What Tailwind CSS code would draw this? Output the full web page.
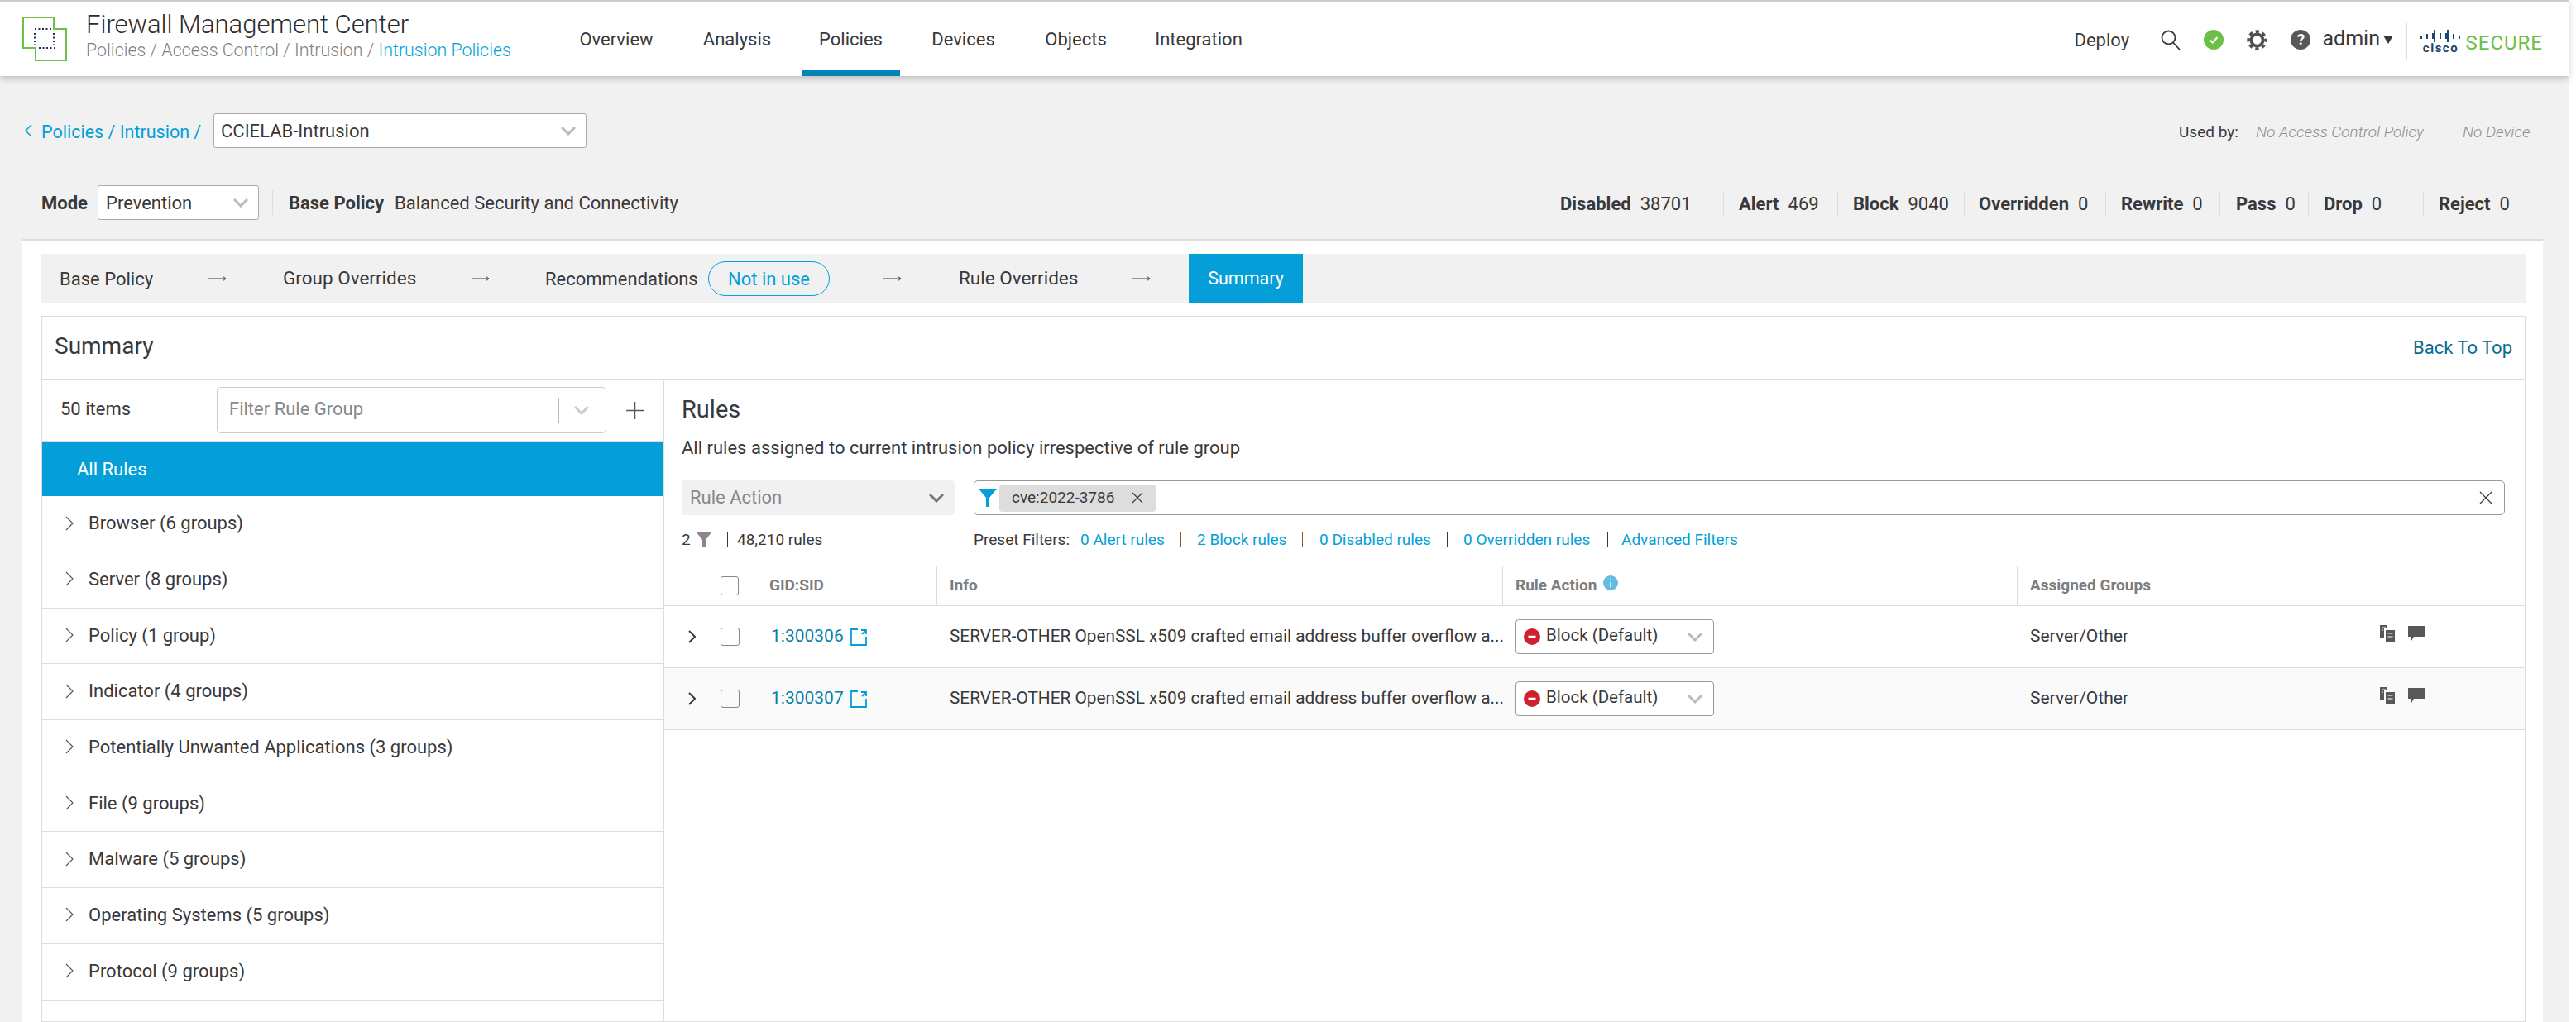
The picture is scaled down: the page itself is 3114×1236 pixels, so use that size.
<!DOCTYPE html>
<html lang="en">
<head>
  <meta charset="UTF-8" />
  <title>Firewall Management Center</title>
  <script src="https://cdn.jsdelivr.net/npm/@tailwindcss/browser@4"></script>
</head>
<body class="bg-white">
  <div class="w-[3114px] h-[1236px] overflow-hidden bg-white [font-family:Roboto,sans-serif] text-[22px] text-[#39393b]">
    <div class="w-[3106px] h-full border-r border-[#777] bg-[#f1f1f1] flex flex-col">

      <!-- top bar -->
      <header class="h-[92px] shrink-0 bg-white border-t-2 border-[#ccc] shadow-[0_3px_8px_rgba(0,0,0,0.22)] flex items-stretch relative z-10">
        <div class="w-[104px] shrink-0 pl-[27px] pt-[18px]">
          <svg width="56" height="56" viewBox="0 0 56 56" fill="none">
            <path d="M1 1H38V15H53V53H16V38H1Z" stroke="#6cc04a" stroke-width="2"/>
            <path d="M15 15H35M15 20V34M38 20V34M20 38H39" stroke="#1e2f5e" stroke-width="2" stroke-dasharray="2 2.500"/>
          </svg>
        </div>
        <div class="w-[573px] shrink-0 pt-[10px]">
          <div class="text-[31px] leading-[35px] font-light text-[#2b2b2d]">Firewall Management Center</div>
          <div class="mt-[1px] text-[21.400px] leading-[25px] font-light text-[#7f7f82]">Policies / Access Control / Intrusion / <span class="text-[#049fd9]">Intrusion Policies</span></div>
        </div>
        <nav class="flex items-stretch">
          <a class="w-[136px] flex items-center justify-center pt-[7px] border-b-[7px] border-transparent">Overview</a>
          <a class="w-[156px] flex items-center justify-center pt-[7px] border-b-[7px] border-transparent">Analysis</a>
          <a class="w-[119px] flex items-center justify-center pt-[7px] border-b-[7px] border-[#0284b5]">Policies</a>
          <a class="w-[153px] flex items-center justify-center pt-[7px] border-b-[7px] border-transparent">Devices</a>
          <a class="w-[119px] flex items-center justify-center pt-[7px] border-b-[7px] border-transparent">Objects</a>
          <a class="w-[178px] flex items-center justify-center pt-[7px] border-b-[7px] border-transparent">Integration</a>
        </nav>
        <div class="flex-1"></div>
        <div class="flex items-center pr-[31px] pt-[2px]">
          <span class="w-[105px]">Deploy</span>
          <svg class="w-[24px] h-[24px]" viewBox="0 0 24 24" fill="none" stroke="#39393b" stroke-width="1.800">
            <circle cx="9.500" cy="9.500" r="8"/><path d="M15 15.500L23 24"/>
          </svg>
          <svg class="ml-[28px] w-[24px] h-[24px]" viewBox="0 0 24 24">
            <circle cx="12" cy="12" r="12" fill="#6cc04a"/><path d="M7.500 12.500L10.800 15.500L16.500 9" fill="none" stroke="#fff" stroke-width="2"/>
          </svg>
          <svg class="ml-[28px] w-[25px] h-[25px]" viewBox="0 0 24 24" fill="none" stroke="#4f4f52">
            <circle cx="12" cy="12" r="6.800" stroke-width="3.600"/>
            <circle cx="12" cy="12" r="10" stroke-width="3.400" stroke-dasharray="4.200 3.650" stroke-dashoffset="2.100"/>
          </svg>
          <div class="ml-[28px] w-[24px] h-[24px] rounded-full bg-[#58585b] text-white text-[19px] leading-[24px] font-bold text-center">?</div>
          <span class="ml-[14px] w-[68px] text-[25px] leading-[28px] pb-[3px]">admin</span>
          <svg class="ml-[6px] mb-[1px]" width="12" height="10" viewBox="0 0 12 10"><path d="M0 0H12L6 10Z" fill="#39393b"/></svg>
          <div class="ml-[16px] mt-[4px] w-px h-[45px] bg-[#ddd]"></div>
          <div class="ml-[15px] w-[50px] mt-[4px] flex flex-col items-center">
            <svg width="48" height="16" viewBox="0 0 48 16" stroke="#1e4471" stroke-width="2">
              <path d="M1 7V11M8 5V11M15 4V11M17 0V15M24 4V11M31 4V11M33 0V15M40 5V11M47 7V11"/>
            </svg>
            <span class="text-[15px] leading-[13px] font-bold tracking-[1.500px] text-[#1e4471]">cisco</span>
          </div>
          <span class="ml-[5px] mt-[8px] text-[24px] leading-[28px] tracking-[1px] text-[#6cc04a]">SECURE</span>
        </div>
      </header>

      <!-- breadcrumb -->
      <div class="mt-[45px] h-[42px] shrink-0 flex items-center pl-[30px]">
        <svg width="9" height="16" viewBox="0 0 9 16" fill="none" stroke="#049fd9" stroke-width="1.500"><path d="M8 1L1 8L8 15"/></svg>
        <span class="ml-[11px] w-[208px] text-[21.500px] text-[#049fd9] pt-[5px]">Policies / Intrusion /</span>
        <div class="w-[451px] h-[42px] bg-white border border-[#aaa] rounded-[3px] flex items-center pl-[8px] pr-[12px] justify-between">
          <span>CCIELAB-Intrusion</span>
          <svg width="18" height="11" viewBox="0 0 18 11" fill="none" stroke="#bbb" stroke-width="3"><path d="M1 1L9 9L17 1"/></svg>
        </div>
        <div class="flex-1"></div>
        <span class="w-[93px] text-[19px] pt-[4px]">Used by:</span>
        <i class="w-[227px] text-[19px] text-[#8d8d90] font-light pt-[4px]">No Access Control Policy</i>
        <div class="w-px h-[18px] mt-[4px] bg-[#8a5a2b]"></div>
        <i class="ml-[22px] w-[128px] text-[19px] text-[#8d8d90] font-light pt-[4px]">No Device</i>
      </div>

      <!-- mode + stats -->
      <div class="mt-[45px] h-[42px] shrink-0 flex items-center pl-[50px]">
        <b class="w-[68px] font-bold">Mode</b>
        <div class="w-[195px] h-[42px] bg-white border border-[#aaa] rounded-[3px] flex items-center pl-[9px] pr-[12px] justify-between">
          <span>Prevention</span>
          <svg width="18" height="11" viewBox="0 0 18 11" fill="none" stroke="#bbb" stroke-width="3"><path d="M1 1L9 9L17 1"/></svg>
        </div>
        <div class="ml-[16px] w-px h-[30px] bg-[#ddd]"></div>
        <b class="ml-[19px] font-bold w-[128px]">Base Policy</b>
        <span>Balanced Security and Connectivity</span>
        <div class="flex-1"></div>
        <div class="flex items-center h-[30px] mt-[2px] pr-[70px]">
          <div class="w-[197px]"><b class="font-bold mr-[11px]">Disabled</b>38701</div>
          <div class="w-[138px] h-full flex items-center border-l border-[#ddd] pl-[18px]"><b class="font-bold mr-[11px]">Alert</b>469</div>
          <div class="w-[153px] h-full flex items-center border-l border-[#ddd] pl-[18px]"><b class="font-bold mr-[11px]">Block</b>9040</div>
          <div class="w-[171px] h-full flex items-center border-l border-[#ddd] pl-[17px]"><b class="font-bold mr-[11px]">Overridden</b>0</div>
          <div class="w-[138px] h-full flex items-center border-l border-[#ddd] pl-[18px]"><b class="font-bold mr-[11px]">Rewrite</b>0</div>
          <div class="w-[107px] h-full flex items-center border-l border-[#ddd] pl-[19px]"><b class="font-bold mr-[11px]">Pass</b>0</div>
          <div class="w-[139px] h-full flex items-center border-l border-[#ddd] pl-[18px]"><b class="font-bold mr-[11px]">Drop</b>0</div>
          <div class="w-[106px] h-full flex items-center border-l border-[#ddd] pl-[18px]"><b class="font-bold mr-[11px]">Reject</b>0</div>
        </div>
      </div>

      <!-- main card -->
      <div class="mt-[23px] ml-[27px] w-[3047px] flex-1 min-h-0 bg-white border-t-[3px] border-[#ddd] pl-[23px] pr-[21px] pt-[15px] flex flex-col">
        <div class="h-[60px] shrink-0 bg-[#f1f1f1] flex items-center pl-[22px] text-[22px]">
          <span class="w-[180px]">Base Policy</span>
          <svg class="w-[90px]" height="10" viewBox="0 0 90 10" fill="none" stroke="#39393b"><path d="M0 5H21M17 2L21 5L17 8"/></svg>
          <span class="w-[228px] text-[22.500px]">Group Overrides</span>
          <svg class="w-[89px]" height="10" viewBox="0 0 89 10" fill="none" stroke="#39393b"><path d="M0 5H21M17 2L21 5L17 8"/></svg>
          <span class="w-[197px]">Recommendations</span>
          <span class="w-[147px] h-[42px] rounded-full border border-[#049fd9] text-[#049fd9] flex items-center justify-center">Not in use</span>
          <svg class="ml-[65px] w-[91px]" height="10" viewBox="0 0 91 10" fill="none" stroke="#39393b"><path d="M0 5H21M17 2L21 5L17 8"/></svg>
          <span class="w-[210px] text-[22.500px]">Rule Overrides</span>
          <svg class="w-[68px]" height="10" viewBox="0 0 68 10" fill="none" stroke="#39393b"><path d="M0 5H21M17 2L21 5L17 8"/></svg>
          <span class="w-[138px] h-full text-[21.500px] bg-[#049fd9] text-white flex items-center justify-center">Summary</span>
        </div>

        <div class="mt-[15px] flex-1 min-h-0 border border-[#ddd] flex flex-col overflow-hidden">
          <div class="h-[76px] shrink-0 border-b border-[#ddd] flex items-center justify-between pl-[15px] pr-[15px]">
            <span class="text-[28px] pb-[3px]">Summary</span>
            <span class="text-[#0a6a91]">Back To Top</span>
          </div>
          <div class="flex-1 min-h-0 flex">

            <!-- rule groups -->
            <aside class="w-[752px] shrink-0 border-r border-[#ddd]">
              <div class="h-[75px] border-b border-[#ddd] flex items-center pl-[22px]">
                <span class="w-[189px] pb-[3px]">50 items</span>
                <div class="w-[471px] h-[56px] border border-[#ccc] rounded-[5px] flex items-center pl-[14px]">
                  <span class="w-[398px] pb-[3px] text-[#88888b]">Filter Rule Group</span>
                  <div class="w-px h-[31px] bg-[#bbb]"></div>
                  <svg class="ml-[18px]" width="18" height="11" viewBox="0 0 18 11" fill="none" stroke="#ccc" stroke-width="3"><path d="M1 1L9 9L17 1"/></svg>
                </div>
                <svg class="ml-[24px]" width="21" height="21" viewBox="0 0 21 21" stroke="#58585b" stroke-width="1.500"><path d="M0 10.500H21M10.500 0V21"/></svg>
              </div>
              <div class="h-[66px] bg-[#049fd9] text-white flex items-center pl-[42px]">All Rules</div>
              <div class="h-[68px] border-b border-[#ddd] flex items-center pl-[28px] pb-[2px]"><svg class="mr-[18px]" width="10" height="18" viewBox="0 0 10 18" fill="none" stroke="#58585b" stroke-width="1.200"><path d="M1 1L9 9L1 17"/></svg>Browser (6 groups)</div>
              <div class="h-[67.700px] border-b border-[#ddd] flex items-center pl-[28px] pb-[2px]"><svg class="mr-[18px]" width="10" height="18" viewBox="0 0 10 18" fill="none" stroke="#58585b" stroke-width="1.200"><path d="M1 1L9 9L1 17"/></svg>Server (8 groups)</div>
              <div class="h-[67.700px] border-b border-[#ddd] flex items-center pl-[28px] pb-[2px]"><svg class="mr-[18px]" width="10" height="18" viewBox="0 0 10 18" fill="none" stroke="#58585b" stroke-width="1.200"><path d="M1 1L9 9L1 17"/></svg>Policy (1 group)</div>
              <div class="h-[67.700px] border-b border-[#ddd] flex items-center pl-[28px] pb-[2px]"><svg class="mr-[18px]" width="10" height="18" viewBox="0 0 10 18" fill="none" stroke="#58585b" stroke-width="1.200"><path d="M1 1L9 9L1 17"/></svg>Indicator (4 groups)</div>
              <div class="h-[67.700px] border-b border-[#ddd] flex items-center pl-[28px] pb-[2px]"><svg class="mr-[18px]" width="10" height="18" viewBox="0 0 10 18" fill="none" stroke="#58585b" stroke-width="1.200"><path d="M1 1L9 9L1 17"/></svg>Potentially Unwanted Applications (3 groups)</div>
              <div class="h-[67.700px] border-b border-[#ddd] flex items-center pl-[28px] pb-[2px]"><svg class="mr-[18px]" width="10" height="18" viewBox="0 0 10 18" fill="none" stroke="#58585b" stroke-width="1.200"><path d="M1 1L9 9L1 17"/></svg>File (9 groups)</div>
              <div class="h-[67.700px] border-b border-[#ddd] flex items-center pl-[28px] pb-[2px]"><svg class="mr-[18px]" width="10" height="18" viewBox="0 0 10 18" fill="none" stroke="#58585b" stroke-width="1.200"><path d="M1 1L9 9L1 17"/></svg>Malware (5 groups)</div>
              <div class="h-[67.700px] border-b border-[#ddd] flex items-center pl-[28px] pb-[2px]"><svg class="mr-[18px]" width="10" height="18" viewBox="0 0 10 18" fill="none" stroke="#58585b" stroke-width="1.200"><path d="M1 1L9 9L1 17"/></svg>Operating Systems (5 groups)</div>
              <div class="h-[67.700px] border-b border-[#ddd] flex items-center pl-[28px] pb-[2px]"><svg class="mr-[18px]" width="10" height="18" viewBox="0 0 10 18" fill="none" stroke="#58585b" stroke-width="1.200"><path d="M1 1L9 9L1 17"/></svg>Protocol (9 groups)</div>
            </aside>

            <!-- rules -->
            <section class="flex-1 min-w-0">
              <div class="pl-[21px] pr-[24px] pt-[19px]">
                <h2 class="text-[29px] leading-[34px]">Rules</h2>
                <p class="mt-[17px] leading-[25px]">All rules assigned to current intrusion policy irrespective of rule group</p>
                <div class="mt-[27px] flex h-[42px]">
                  <div class="w-[330px] bg-[#f1f1f1] rounded-[4px] flex items-center justify-between pl-[10px] pr-[13px] text-[#88888b]">
                    <span class="pb-[2px]">Rule Action</span>
                    <svg width="18" height="11" viewBox="0 0 18 11" fill="none" stroke="#777" stroke-width="3"><path d="M1 1L9 9L17 1"/></svg>
                  </div>
                  <div class="ml-[23px] flex-1 border border-[#999] rounded-[5px] flex items-center pl-[5px] pr-[14px]">
                    <svg width="22" height="22" viewBox="0 0 22 22"><path d="M0 0H22L13 11V22H9V11Z" fill="#049fd9"/></svg>
                    <div class="ml-[3px] w-[189px] h-[33px] bg-[#ddd] rounded-[4px] flex items-center pl-[15px] text-[19px]">
                      <span class="w-[145px]">cve:2022-3786</span>
                      <svg width="14" height="14" viewBox="0 0 14 14" fill="none" stroke="#39393b" stroke-width="1.200"><path d="M1 1L13 13M13 1L1 13"/></svg>
                    </div>
                    <div class="flex-1"></div>
                    <svg width="16" height="16" viewBox="0 0 16 16" fill="none" stroke="#39393b" stroke-width="1.200"><path d="M1 1L15 15M15 1L1 15"/></svg>
                  </div>
                </div>
                <div class="mt-[18px] h-[24px] flex items-center text-[19px]">
                  <span class="w-[18px]">2</span>
                  <svg width="18" height="18" viewBox="0 0 18 18"><path d="M0 0H18L11 9V18H7V9Z" fill="#88888b"/></svg>
                  <div class="ml-[19px] w-px h-[18px] bg-[#39393b]"></div>
                  <span class="ml-[11px] w-[286px]">48,210 rules</span>
                  <span class="w-[129px]">Preset Filters:</span>
                  <span class="w-[121px] text-[#049fd9]">0 Alert rules</span>
                  <div class="w-px h-[18px] bg-[#8a5a2b]"></div>
                  <span class="ml-[19px] w-[127px] text-[#049fd9]">2 Block rules</span>
                  <div class="w-px h-[18px] bg-[#8a5a2b]"></div>
                  <span class="ml-[20px] w-[154px] text-[#049fd9]">0 Disabled rules</span>
                  <div class="w-px h-[18px] bg-[#39393b]"></div>
                  <span class="ml-[19px] w-[174px] text-[#049fd9]">0 Overridden rules</span>
                  <div class="w-px h-[18px] bg-[#39393b]"></div>
                  <span class="ml-[16px] text-[#049fd9]">Advanced Filters</span>
                </div>
              </div>

              <!-- rule table -->
              <div class="mt-[20px] h-[48px] flex border-b border-[#ddd] text-[19px] font-bold text-[#7d7d80]">
                <div class="w-[329px] flex items-center pl-[68px]">
                  <div class="w-[22px] h-[23px] border border-[#888] rounded-[3px]"></div>
                  <span class="ml-[37px]">GID:SID</span>
                </div>
                <div class="w-[684px] border-l border-[#ddd] flex items-center pl-[15px]">Info</div>
                <div class="w-[622px] border-l border-[#ddd] flex items-center pl-[15px]">Rule Action
                  <svg class="ml-[8px] mb-[8px]" width="18" height="18" viewBox="0 0 18 18"><circle cx="9" cy="9" r="9" fill="#64bbe3"/><path d="M9 8V14M9 4V6" stroke="#fff" stroke-width="1.500"/></svg>
                </div>
                <div class="flex-1 border-l border-[#ddd] flex items-center pl-[15px]">Assigned Groups</div>
              </div>

              <div class="h-[75px] flex items-center border-b border-[#ddd] text-[21px]">
                <div class="w-[329px] flex items-center pl-[29px]">
                  <svg width="9" height="18" viewBox="0 0 9 18" fill="none" stroke="#39393b" stroke-width="2"><path d="M1 2L8 9L1 16"/></svg>
                  <div class="ml-[30px] w-[23px] h-[22px] border border-[#888] rounded-[3px]"></div>
                  <span class="ml-[38px] w-[96px] text-[#0a7ea8]">1:300306</span>
                  <svg width="20" height="21" viewBox="0 0 20 21" fill="none" stroke="#049fd9" stroke-width="1.800"><path d="M9 1H1V20H19V10M13 2H19V7M19 2L14 7"/></svg>
                </div>
                <div class="w-[684px] pl-[16px] whitespace-nowrap text-[20.800px]">SERVER-OTHER OpenSSL x509 crafted email address buffer overflow a...</div>
                <div class="w-[622px] pl-[16px]">
                  <div class="w-[240px] h-[42px] bg-white border border-[#999] rounded-[4px] flex items-center pl-[9px] pr-[13px]">
                    <svg width="20" height="20" viewBox="0 0 20 20"><circle cx="10" cy="10" r="10" fill="#cf2030"/><path d="M5.500 10H14.500" stroke="#fff" stroke-width="2.500"/></svg>
                    <span class="ml-[7px] flex-1 text-[20.500px] pb-[3px]">Block (Default)</span>
                    <svg width="18" height="11" viewBox="0 0 18 11" fill="none" stroke="#bbb" stroke-width="3"><path d="M1 1L9 9L17 1"/></svg>
                  </div>
                </div>
                <div class="flex-1 flex items-center pl-[16px]">
                  <span class="w-[423px]">Server/Other</span>
                  <svg class="mb-[8px]" width="18" height="20" viewBox="0 0 18 20" fill="#58585b"><path d="M0 0H9V4H5V15H0Z"/><path d="M7 6H18V20H7Z"/><path d="M9.500 10H15.500M9.500 14H15.500" stroke="#fff" stroke-width="1.200"/><path d="M2 3H7M2 6H4" stroke="#fff" stroke-width="1"/></svg>
                  <svg class="ml-[16px] mb-[8px]" width="20" height="18" viewBox="0 0 20 18" fill="#58585b"><path d="M0 0H20V13H7L4 18V13H0Z"/></svg>
                </div>
              </div>

              <div class="h-[75px] flex items-center border-b border-[#ddd] bg-[#fafafa] text-[21px]">
                <div class="w-[329px] flex items-center pl-[29px]">
                  <svg width="9" height="18" viewBox="0 0 9 18" fill="none" stroke="#39393b" stroke-width="2"><path d="M1 2L8 9L1 16"/></svg>
                  <div class="ml-[30px] w-[23px] h-[22px] border border-[#888] rounded-[3px]"></div>
                  <span class="ml-[38px] w-[96px] text-[#0a7ea8]">1:300307</span>
                  <svg width="20" height="21" viewBox="0 0 20 21" fill="none" stroke="#049fd9" stroke-width="1.800"><path d="M9 1H1V20H19V10M13 2H19V7M19 2L14 7"/></svg>
                </div>
                <div class="w-[684px] pl-[16px] whitespace-nowrap text-[20.800px]">SERVER-OTHER OpenSSL x509 crafted email address buffer overflow a...</div>
                <div class="w-[622px] pl-[16px]">
                  <div class="w-[240px] h-[42px] bg-white border border-[#999] rounded-[4px] flex items-center pl-[9px] pr-[13px]">
                    <svg width="20" height="20" viewBox="0 0 20 20"><circle cx="10" cy="10" r="10" fill="#cf2030"/><path d="M5.500 10H14.500" stroke="#fff" stroke-width="2.500"/></svg>
                    <span class="ml-[7px] flex-1 text-[20.500px] pb-[3px]">Block (Default)</span>
                    <svg width="18" height="11" viewBox="0 0 18 11" fill="none" stroke="#bbb" stroke-width="3"><path d="M1 1L9 9L17 1"/></svg>
                  </div>
                </div>
                <div class="flex-1 flex items-center pl-[16px]">
                  <span class="w-[423px]">Server/Other</span>
                  <svg class="mb-[8px]" width="18" height="20" viewBox="0 0 18 20" fill="#58585b"><path d="M0 0H9V4H5V15H0Z"/><path d="M7 6H18V20H7Z"/><path d="M9.500 10H15.500M9.500 14H15.500" stroke="#fff" stroke-width="1.200"/><path d="M2 3H7M2 6H4" stroke="#fff" stroke-width="1"/></svg>
                  <svg class="ml-[16px] mb-[8px]" width="20" height="18" viewBox="0 0 20 18" fill="#58585b"><path d="M0 0H20V13H7L4 18V13H0Z"/></svg>
                </div>
              </div>
            </section>
          </div>
        </div>
      </div>
    </div>
  </div>
</body>
</html>
